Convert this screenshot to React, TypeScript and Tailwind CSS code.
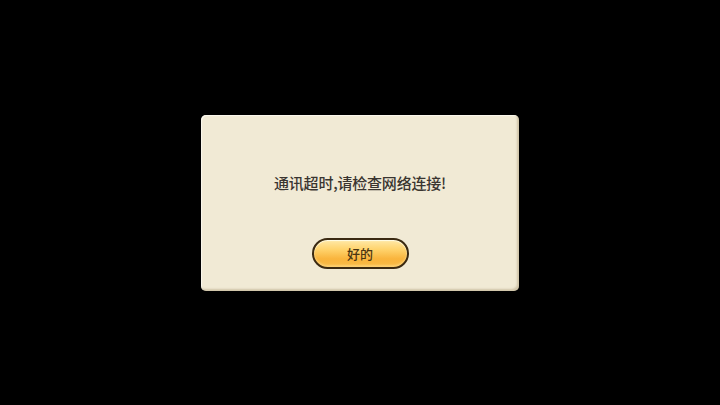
export default function App() {
  return (
    <div className="w-[720px] h-[405px] bg-black flex items-center justify-center" style={{ fontFamily: '"Noto Sans CJK SC", "Noto Sans", sans-serif' }}>
      <div className="w-[318px] h-[176px] rounded-[5px] bg-[#f1ead5] shadow-[inset_-2px_-2px_2px_rgba(150,130,90,0.35),inset_1px_1px_1px_rgba(255,255,250,0.7)] flex flex-col items-center">
        <div className="mt-[58px] text-[15px] leading-[20px] font-medium text-[#3a3530] tracking-[-0.2px]">通讯超时,请检查网络连接!</div>
        <button className="mt-[45px] w-[97px] h-[31px] rounded-full border-2 border-[#3b2a12] bg-[linear-gradient(to_bottom,#ffe9a8_0%,#ffd36c_35%,#f9b43c_70%,#f8bb48_100%)] shadow-[inset_0_1px_1px_rgba(255,255,240,0.9),inset_0_-2px_2px_rgba(255,220,140,0.6)] flex items-center justify-center">
          <span className="text-[13px] leading-none font-medium text-[#4a3512]">好的</span>
        </button>
      </div>
    </div>
  );
}
